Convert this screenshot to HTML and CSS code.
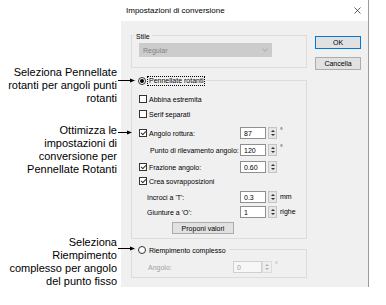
FILE: index.html
```html
<!DOCTYPE html>
<html lang="it">
<head>
    <meta charset="UTF-8">
    <title>Impostazioni di conversione</title>
    <link rel="stylesheet" href="styles.css">
</head>
<body>

<div class="page">

    <!-- didascalie a sinistra -->
    <div class="notes">
        <div class="note note-rotate">
            <p>Seleziona Pennellate<br>rotanti per angoli punti<br>rotanti</p>
            <svg class="arrow arrow-rotate" width="17" height="5" viewBox="0 0 17 5"><line x1="0" y1="2.5" x2="13" y2="2.5" stroke="#000"/><polygon points="12,0.5 17,2.5 12,4.5" fill="#000"/></svg>
        </div>
        <div class="note note-settings">
            <p>Ottimizza le<br>impostazioni di<br>conversione per<br>Pennellate Rotanti</p>
            <svg class="arrow arrow-settings" width="14" height="5" viewBox="0 0 14 5"><line x1="0" y1="2.5" x2="10" y2="2.5" stroke="#000"/><polygon points="9,0.5 14,2.5 9,4.5" fill="#000"/></svg>
        </div>
        <div class="note note-fill">
            <p>Seleziona<br>Riempimento<br>complesso per angolo<br>del punto fisso</p>
            <svg class="arrow arrow-fill" width="17" height="5" viewBox="0 0 17 5"><line x1="0" y1="2.5" x2="13" y2="2.5" stroke="#000"/><polygon points="12,0.5 17,2.5 12,4.5" fill="#000"/></svg>
        </div>
    </div>

    <!-- finestra di dialogo -->
    <div class="dialog">
        <div class="titlebar">
            <span>Impostazioni di conversione</span>
            <svg class="close" width="7" height="7" viewBox="0 0 7 7"><path d="M0.5 0.5 L6.5 6.5 M6.5 0.5 L0.5 6.5" stroke="#333" stroke-width="0.8"/></svg>
        </div>

        <div class="dialog-body">
            <div class="groups">

                <div class="group group-style">
                    <div class="group-title">Stile</div>
                    <div class="combo">
                        <span>Regular</span>
                        <svg width="6" height="4" viewBox="0 0 6 4"><path d="M0.5 0.8 L3 3.2 L5.5 0.8" fill="none" stroke="#9a9a9a" stroke-width="0.8"/></svg>
                    </div>
                </div>

                <div class="group group-rotate">
                    <div class="group-title group-title-radio">
                        <span class="radio on"></span>
                        <span class="focus">Pennellate rotanti</span>
                    </div>

                    <div class="row row-first"><span class="check"></span>Abbina estremita</div>
                    <div class="row row-tight"><span class="check"></span>Serif separati</div>

                    <div class="row row-wide">
                        <div class="cell"><span class="check on"></span>Angolo rottura:</div>
                        <div class="textbox">87</div><div class="spin"></div><span class="unit">°</span>
                    </div>
                    <div class="row row-mid">
                        <div class="cell cell-indent">Punto di rilevamento angolo:</div>
                        <div class="textbox">120</div><div class="spin"></div><span class="unit">°</span>
                    </div>
                    <div class="row row-mid">
                        <div class="cell"><span class="check on"></span>Frazione angolo:</div>
                        <div class="textbox">0.60</div><div class="spin"></div>
                    </div>
                    <div class="row row-close"><span class="check on"></span>Crea sovrapposizioni</div>
                    <div class="row row-normal">
                        <div class="cell cell-sub">Incroci a 'T':</div>
                        <div class="textbox">0.3</div><div class="spin"></div><span class="unit unit-text">mm</span>
                    </div>
                    <div class="row row-tight">
                        <div class="cell cell-sub">Giunture a 'O':</div>
                        <div class="textbox">1</div><div class="spin"></div><span class="unit unit-text">righe</span>
                    </div>
                    <div class="row row-normal">
                        <div class="btn btn-suggest">Proponi valori</div>
                    </div>
                </div>

                <div class="group group-fill">
                    <div class="group-title group-title-radio">
                        <span class="radio"></span>
                        <span class="plain">Riempimento complesso</span>
                    </div>
                    <div class="row row-angle disabled">
                        <div class="cell cell-angle">Angolo:</div>
                        <div class="textbox textbox-wide">0</div><div class="spin spin-flush"></div><span class="unit">°</span>
                    </div>
                </div>

            </div>

            <div class="buttons">
                <div class="btn btn-default">OK</div>
                <div class="btn">Cancella</div>
            </div>
        </div>
    </div>

</div>

</body>
</html>
```

FILE: styles.css
```css
* {
    box-sizing: border-box;
}
body {
    margin: 0;
    background-color: #ffffff;
    font-family: "Liberation Sans", Arial, sans-serif;
}
.page {
    display: flex;
    align-items: flex-start;
}

/* didascalie */
.notes {
    width: 121px;
    flex: none;
    display: flex;
    flex-direction: column;
}
.note {
    position: relative;
    width: 117px;
    text-align: right;
    font-size: 11px;
    line-height: 13px;
    color: #000;
}
.note p {
    margin: 0;
}
.note-rotate {
    margin-top: 66px;
}
.note-settings {
    margin-top: 19px;
}
.note-fill {
    margin-top: 60px;
}
.arrow {
    position: absolute;
    left: 100%;
}
.arrow-rotate {
    top: 12px;
    margin-left: 1px;
}
.arrow-settings {
    top: 6px;
    margin-left: 1px;
}
.arrow-fill {
    top: 10px;
    margin-left: 1px;
}

/* finestra */
.dialog {
    width: 248px;
    flex: none;
    border-right: 1px solid #9a9a9a;
    font-size: 7px;
    color: #000;
}
.titlebar {
    height: 21px;
    display: flex;
    align-items: center;
    justify-content: space-between;
    padding: 0 7px 0 5px;
    font-size: 8px;
    background-color: #ffffff;
}
.dialog-body {
    display: flex;
    gap: 8px;
    padding: 14px 6px 9px 10px;
    background-color: #f0f0f0;
}
.groups {
    width: 176px;
    display: flex;
    flex-direction: column;
}
.group {
    border: 1px solid #dcdcdc;
    padding: 0 0 4px 7px;
}
.group-style {
    padding-bottom: 10px;
}
.group-rotate {
    margin-top: 12px;
}
.group-fill {
    margin-top: 10px;
}
.group-title {
    display: flex;
    align-items: center;
    gap: 2px;
    width: fit-content;
    height: 10px;
    margin: -5px 0 0 -5px;
    padding: 0 2px;
    background-color: #f0f0f0;
}
.group-title-radio {
    margin-left: -3px;
}
.focus {
    outline: 1px dotted #000;
    line-height: 8px;
    padding: 0 1px;
}
.plain {
    padding: 0 1px;
}

/* combo disabilitato */
.combo {
    width: 133px;
    height: 14px;
    margin-top: 2px;
    display: flex;
    align-items: center;
    justify-content: space-between;
    padding: 0 4px;
    background-color: #cccccc;
    color: #838383;
}

/* righe */
.row {
    display: flex;
    align-items: center;
    height: 12px;
}
.row-first {
    margin-top: 7px;
}
.row-tight {
    margin-top: 3px;
}
.row-wide {
    margin-top: 7px;
}
.row-mid {
    margin-top: 5px;
}
.row-close {
    margin-top: 2px;
}
.row-normal {
    margin-top: 4px;
}
.row-angle {
    margin-top: 6px;
}
.cell {
    width: 101px;
    display: flex;
    align-items: center;
}
.cell-indent {
    padding-left: 11px;
}
.cell-sub {
    padding-left: 8px;
}
.cell-angle {
    width: 94px;
    padding-left: 9px;
}
.check {
    width: 8px;
    height: 8px;
    flex: none;
    margin-right: 2px;
    border: 1px solid #333;
    background-color: #fff;
}
.check.on::after {
    content: "";
    display: block;
    width: 4px;
    height: 2px;
    margin: 1px 0 0 1px;
    border-left: 1px solid #333;
    border-bottom: 1px solid #333;
    transform: rotate(-45deg);
}
.radio {
    width: 8px;
    height: 8px;
    flex: none;
    display: flex;
    align-items: center;
    justify-content: center;
    border: 1px solid #333;
    border-radius: 50%;
    background-color: #fff;
}
.radio.on::after {
    content: "";
    width: 4px;
    height: 4px;
    border-radius: 50%;
    background-color: #000;
}

/* caselle numeriche */
.textbox {
    width: 26px;
    height: 12px;
    display: flex;
    align-items: center;
    padding-left: 3px;
    border: 1px solid #8f8f8f;
    background-color: #fff;
}
.textbox-wide {
    width: 29px;
}
.spin {
    width: 9px;
    height: 12px;
    margin-left: 2px;
    display: flex;
    flex-direction: column;
    align-items: center;
    justify-content: space-evenly;
    border: 1px solid #c4c4c4;
    background-color: #e6e6e6;
}
.spin::before {
    content: "";
    border-left: 2px solid transparent;
    border-right: 2px solid transparent;
    border-bottom: 2px solid #333;
}
.spin::after {
    content: "";
    border-left: 2px solid transparent;
    border-right: 2px solid transparent;
    border-top: 2px solid #333;
}
.spin-flush {
    width: 10px;
    margin-left: 0;
}
.unit {
    margin-left: 3px;
    align-self: flex-start;
    line-height: 8px;
}
.unit-text {
    align-self: center;
    line-height: 12px;
}

/* stato disabilitato */
.disabled {
    color: #a0a0a0;
}
.disabled .textbox {
    border-color: #d0d0d0;
    background-color: #f7f7f7;
}
.disabled .spin {
    border-color: #dcdcdc;
    background-color: #efefef;
}
.disabled .spin::before {
    border-bottom-color: #b0b0b0;
}
.disabled .spin::after {
    border-top-color: #b0b0b0;
}

/* pulsanti */
.buttons {
    width: 46px;
    display: flex;
    flex-direction: column;
    gap: 8px;
    padding-top: 1px;
}
.btn {
    height: 13px;
    display: flex;
    align-items: center;
    justify-content: center;
    border: 1px solid #adadad;
    background-color: #e1e1e1;
}
.btn-default {
    border-color: #0078d7;
}
.btn-suggest {
    width: 62px;
    height: 12px;
    margin-left: 33px;
}
```
